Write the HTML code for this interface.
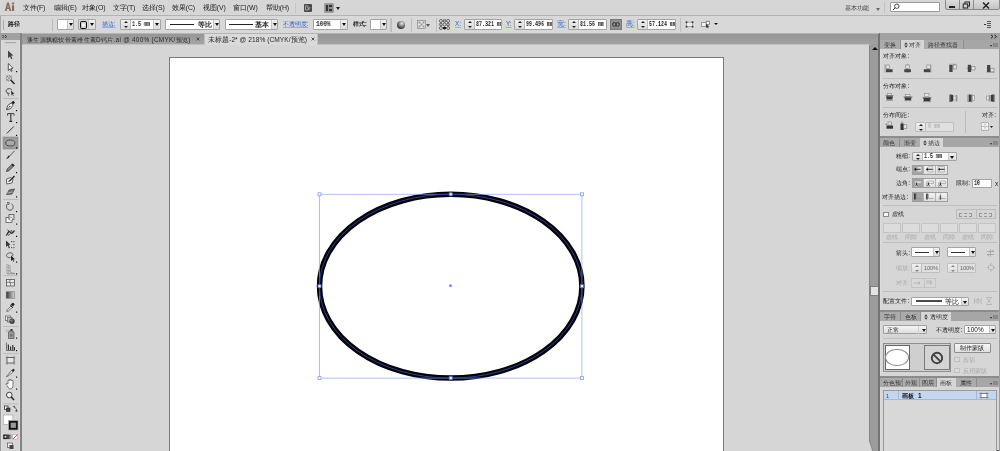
<!DOCTYPE html>
<html><head><meta charset="utf-8">
<style>
*{margin:0;padding:0;box-sizing:border-box}
html,body{width:1000px;height:451px;overflow:hidden;background:#d6d6d6;font-family:"Liberation Sans",sans-serif;color:#222;position:relative}
.a{position:absolute}
.t{position:absolute;font-size:6.4px;line-height:10px;white-space:nowrap;color:#2a2a2a;letter-spacing:-0.1px;will-change:transform}
.pn .t{font-weight:500;color:#262626;letter-spacing:0.12px}
.pn .t.lg{font-weight:normal;color:#aaa}
.m{top:3px;color:#222;font-size:6.9px}
.tri{position:absolute;width:0;height:0;border-left:2px solid transparent;border-right:2px solid transparent;border-top:3px solid #222}
.box,.sp{position:absolute;top:19px;height:11px;border:1px solid #a4a4a4;background:#e2e2e2;border-radius:1px;overflow:hidden}
.wf{position:absolute;left:0;top:0;height:9px;background:#fff}
.dd{position:absolute;top:0;height:9px;background:linear-gradient(#f2f2f2,#dcdcdc);border-left:1px solid #c4c4c4}
.dd:after{content:"";position:absolute;left:50%;top:3px;margin-left:-2px;border-left:2px solid transparent;border-right:2px solid transparent;border-top:3px solid #111}
.ar{position:absolute;left:0;top:0;width:10px;height:9px;background:linear-gradient(#f0f0f0,#dadada);border-right:1px solid #bcbcbc}
.ar:before{content:"";position:absolute;left:3px;top:1px;border-left:2px solid transparent;border-right:2px solid transparent;border-bottom:2.5px solid #222}
.ar:after{content:"";position:absolute;left:3px;top:5.5px;border-left:2px solid transparent;border-right:2px solid transparent;border-top:2.5px solid #222}
.tx{position:absolute;top:0;will-change:transform;font:bold 6.4px/9px "Liberation Mono",monospace;color:#1a1a1a;white-space:nowrap;transform:scaleX(0.78);transform-origin:0 0}
.blu{color:#2f62d0;font-weight:500;text-decoration:underline;text-decoration-color:#8fb0ea}
.tab{position:absolute;height:9px;font-size:6.3px;font-weight:500;will-change:transform;line-height:9px;text-align:center;color:#333;background:#ababab;border-right:1px solid #8f8f8f;white-space:nowrap;overflow:hidden}
.tab.act{background:#d6d6d6;color:#333;border-right:none}
.pm{position:absolute;left:990px;width:7px;height:5px}
.pm:before{content:"";position:absolute;left:0;top:1.5px;border-left:1.5px solid transparent;border-right:1.5px solid transparent;border-top:2px solid #333}
.pm:after{content:"";position:absolute;left:3px;top:-0.5px;width:4.5px;height:4.5px;background:#8a8a8a}
.bg3{position:absolute;left:911.7px;width:36.3px;height:10px;border:1px solid #9e9e9e;background:#e4e4e4;display:flex}
.bg3 i{flex:1;border-right:1px solid #b4b4b4;background:linear-gradient(#f2f2f2,#dedede)}
.bg3 i:last-child{border-right:none}
.bg3 i.s{background:#a4a4a4}
.dash{position:absolute;top:223.3px;width:17.5px;height:9.3px;border:1px solid #c4c4c4;background:#dcdcdc}
.lg{color:#b0b0b0}
.sp.dis{background:#e0e0e0;border-color:#c0c0c0}
.ar.lt:before,.ar.lt:after{border-top-color:#888;border-bottom-color:#888}
.ud{display:inline-block;width:4px;height:6px;margin-right:1px;vertical-align:-0.5px;background:linear-gradient(#555,#555) 1.5px 2.5px/1px 1px no-repeat;position:relative}
.ud:before{content:"";position:absolute;left:0;top:0;border-left:2px solid transparent;border-right:2px solid transparent;border-bottom:2.5px solid #555}
.ud:after{content:"";position:absolute;left:0;top:3.5px;border-left:2px solid transparent;border-right:2px solid transparent;border-top:2.5px solid #555}
</style></head><body>
<!-- menu bar -->
<div class="a" style="left:0;top:0;width:1000px;height:15px;background:#d6d6d6"></div>
<div class="a" style="left:0;top:15px;width:1000px;height:1px;background:#b3b3b3"></div><div class="a" style="left:0;top:16px;width:1000px;height:1px;background:#e0e0e0"></div>
<div class="a" style="left:0;top:16px;width:1000px;height:17px;background:#d8d8d8"></div>
<div class="a" style="left:22px;top:33px;width:857px;height:11px;background:linear-gradient(#939393,#a2a2a2)"></div>
<div class="a" style="left:0;top:33px;width:20px;height:7px;background:#a0a0a0"></div>
<div class="a" style="left:0;top:40px;width:1px;height:411px;background:#9a9a9a"></div><div class="a" style="left:1px;top:40px;width:1px;height:411px;background:#dcdcdc"></div>
<div class="a" style="left:2px;top:40px;width:17px;height:411px;background:#d6d6d6"></div><div class="a" style="left:19px;top:40px;width:1px;height:411px;background:#dcdcdc"></div>
<div class="a" style="left:20px;top:33px;width:2px;height:418px;background:#838383"></div>
<div class="a" style="left:169px;top:57px;width:555px;height:400px;background:#fff;border:1px solid #7a7a7a;border-bottom:none"></div>
<div class="a" style="left:869px;top:44px;width:1px;height:407px;background:#858585"></div><div class="a" style="left:870px;top:44px;width:8px;height:407px;background:#9c9c9c"></div>
<div class="a" style="left:878px;top:33px;width:2px;height:418px;background:#737373"></div><div class="a" style="left:880px;top:33px;width:1px;height:418px;background:#dcdcdc"></div>
<div class="a" style="left:881px;top:33px;width:119px;height:418px;background:#d6d6d6"></div>
<!-- MENU -->
<svg class="a" style="left:0;top:0" width="20" height="15" viewBox="0 0 20 15"><path d="M4.8 11 L7.1 2.5 L8.9 2.5 L11.2 11 L9.4 11 L8.95 9.1 L7.05 9.1 L6.6 11 Z M7.45 7.5 L8.55 7.5 L8 4.9 Z" fill="#8a6d58" fill-rule="evenodd"/><rect x="11.9" y="5.2" width="2.2" height="5.8" fill="#8a6d58"/><rect x="11.9" y="2.5" width="2.2" height="1.9" fill="#8a6d58"/></svg>
<div class="t m" style="left:23px">文件(F)</div>
<div class="t m" style="left:53.5px">编辑(E)</div>
<div class="t m" style="left:82px">对象(O)</div>
<div class="t m" style="left:112.5px">文字(T)</div>
<div class="t m" style="left:142px">选择(S)</div>
<div class="t m" style="left:172px">效果(C)</div>
<div class="t m" style="left:202.5px">视图(V)</div>
<div class="t m" style="left:232.5px">窗口(W)</div>
<div class="t m" style="left:265.5px">帮助(H)</div>
<div class="a" style="left:295px;top:3px;width:1px;height:10px;background:#c4c4c4"></div>
<div class="a" style="left:304px;top:4px;width:8px;height:8px;background:#4a4a4a;border-radius:1px"></div>
<svg class="a" style="left:304px;top:4px" width="8" height="8" viewBox="0 0 8 8"><path d="M1.6 1.8h1.8c1.2 0 1.2 1.8 0 1.9 1.4 0 1.4 2.3 0 2.3H1.6z" fill="none" stroke="#bbb" stroke-width="0.8"/><path d="M5 3.5v2.6M5 4.2c0.4-0.6 0.9-0.7 1.4-0.6" stroke="#bbb" stroke-width="0.8" fill="none"/></svg>
<div class="a" style="left:324px;top:3px;width:10px;height:10px;background:#8f8f8f;border:1px solid #a0a0a0;border-radius:1px"></div>
<div class="a" style="left:325.8px;top:4.8px;width:2.5px;height:6.5px;background:#333"></div>
<div class="a" style="left:329px;top:5px;width:3px;height:2px;background:#333"></div>
<div class="a" style="left:329px;top:9px;width:3px;height:2px;background:#333"></div>
<div class="tri" style="left:335.5px;top:7px"></div>
<div class="t" style="left:844.5px;top:2.5px;color:#3a3a3a;font-weight:500">基本功能</div>
<div class="tri" style="left:876px;top:7.5px;border-top-color:#666"></div>
<div class="a" style="left:884px;top:2px;width:1px;height:11px;background:#c2c2c2"></div>
<div class="a" style="left:890px;top:2px;width:50px;height:10px;background:#fff;border:1px solid #9a9a9a;border-radius:1px"></div>
<svg class="a" style="left:892px;top:3px" width="8" height="8" viewBox="0 0 8 8"><circle cx="4.8" cy="3.2" r="2.2" fill="none" stroke="#333" stroke-width="0.9"/><path d="M3.2 4.8 L1 7" stroke="#333" stroke-width="1"/></svg>
<div class="a" style="left:945px;top:-1px;width:55px;height:11px;background:linear-gradient(#dcdcdc,#c4c4c4);border:1px solid #8a8a8a;border-radius:0 0 2px 2px"></div>
<div class="a" style="left:959px;top:0;width:1px;height:10px;background:#8a8a8a"></div>
<div class="a" style="left:973px;top:0;width:1px;height:10px;background:#8a8a8a"></div>
<div class="a" style="left:949px;top:6px;width:6px;height:2px;background:#222"></div>
<svg class="a" style="left:962px;top:1px" width="9" height="8" viewBox="0 0 9 8"><rect x="3" y="1" width="4.5" height="4" fill="none" stroke="#222" stroke-width="1"/><rect x="1.2" y="3" width="4.5" height="4" fill="#d0d0d0" stroke="#222" stroke-width="1"/></svg>
<svg class="a" style="left:982px;top:1.5px" width="8" height="7" viewBox="0 0 8 7"><path d="M1 0.5 L7 6.5 M7 0.5 L1 6.5" stroke="#222" stroke-width="1.4"/></svg>
<!-- CONTROL BAR -->
<div class="a" style="left:3px;top:20px;width:1px;height:10px;background:#a8a8a8"></div>
<div class="t" style="left:7.5px;top:19px;font-weight:600;color:#222">路径</div><div class="a" style="left:0;top:16px;width:1px;height:17px;background:#a8a8a8"></div>
<div class="a" style="left:52px;top:19px;width:1px;height:12px;background:#bdbdbd"></div>
<div class="box" style="left:57px;width:17px"><div class="wf" style="width:9px"></div><div class="dd" style="left:9px;width:7px"></div></div>
<div class="box" style="left:78px;width:18px;background:#d8d8d8"><div class="a" style="left:0.8px;top:1.4px;width:7.6px;height:7.3px;border:1.85px solid #0a0a0a;border-radius:1.5px;background:radial-gradient(#fff 15%,#b0b0b0 90%)"></div><div class="dd" style="left:9px;width:7px"></div></div>
<div class="t blu" style="left:102px;top:19px">描边:</div>
<div class="sp" style="left:120px;width:41px"><div class="ar"></div><div class="wf" style="left:10px;width:23px"></div><div class="tx" style="left:11px">1.5 mm</div><div class="dd" style="left:32px;width:7px"></div></div>
<div class="box" style="left:165px;width:55px"><div class="wf" style="width:47px"></div><div class="a" style="left:3.5px;top:4px;width:24.5px;height:1px;background:#222"></div><div class="t" style="left:31.5px;top:-0.5px;font-size:6.6px;line-height:10px;color:#222;font-weight:600">等比</div><div class="dd" style="left:47px;width:6px"></div></div>
<div class="box" style="left:225px;width:53px"><div class="wf" style="width:45px"></div><div class="a" style="left:3px;top:4px;width:23.5px;height:1px;background:#222"></div><div class="t" style="left:29px;top:-0.5px;font-size:6.6px;line-height:10px;color:#222;font-weight:600">基本</div><div class="dd" style="left:45px;width:6px"></div></div>
<div class="t blu" style="left:283px;top:19px">不透明度:</div>
<div class="box" style="left:313px;width:35px"><div class="wf" style="width:27px"></div><div class="tx" style="left:1.5px;transform:scaleX(0.95)">100%</div><div class="dd" style="left:26px;width:7px"></div></div>
<div class="t" style="left:352.5px;top:19px;font-weight:600;color:#2a2a2a">样式:</div>
<div class="box" style="left:370px;width:17px"><div class="wf" style="width:10px"></div><div class="dd" style="left:9px;width:6px"></div></div>
<div class="a" style="left:390.5px;top:18px;width:1px;height:14px;background:#bdbdbd"></div>
<div class="a" style="left:397px;top:20.5px;width:8px;height:8px;border-radius:50%;background:radial-gradient(circle at 60% 30%,#eee 0,#999 30%,#444 65%,#111 100%)"></div><div class="a" style="left:390px;top:18px;width:1px;height:14px;background:#c2c2c2"></div>
<div class="a" style="left:410.5px;top:18px;width:1px;height:14px;background:#bdbdbd"></div>
<svg class="a" style="left:416.5px;top:20px" width="9" height="9" viewBox="0 0 9 9"><rect x="0.5" y="0.5" width="8" height="8" fill="#e6e6e6" stroke="#888" stroke-width="0.7"/><g fill="#999"><rect x="1.5" y="1.5" width="2" height="2"/><rect x="5.5" y="1.5" width="2" height="2"/><rect x="3.5" y="3.5" width="2" height="2"/><rect x="1.5" y="5.5" width="2" height="2"/><rect x="5.5" y="5.5" width="2" height="2"/></g></svg>
<div class="tri" style="left:426px;top:24px;border-top-color:#555"></div>
<div class="a" style="left:436px;top:18px;width:1px;height:14px;background:#bdbdbd"></div>
<svg class="a" style="left:439px;top:18.5px" width="11" height="11" viewBox="0 0 11 11"><g fill="#e0e0e0" stroke="#444" stroke-width="0.75"><circle cx="1.9" cy="1.9" r="1.45"/><circle cx="5.5" cy="1.9" r="1.45"/><circle cx="9.1" cy="1.9" r="1.45"/><circle cx="1.9" cy="5.5" r="1.45"/><circle cx="5.5" cy="5.5" r="1.45"/><circle cx="9.1" cy="5.5" r="1.45"/><circle cx="1.9" cy="9.1" r="1.45"/><circle cx="9.1" cy="9.1" r="1.45"/></g><path d="M1.9 3.4V7.6M9.1 3.4V7.6M3.4 1.9H7.6M3.4 9.1H7.6" stroke="#555" stroke-width="0.6"/><ellipse cx="5.5" cy="9.1" rx="1.7" ry="1.3" fill="#111"/></svg>
<div class="t blu" style="left:455px;top:19px">X:</div>
<div class="sp" style="left:463.5px;width:38px"><div class="ar"></div><div class="wf" style="left:10px;width:27px"></div><div class="tx" style="left:11px">87.321 mm</div></div>
<div class="t blu" style="left:505.5px;top:19px">Y:</div>
<div class="sp" style="left:514px;width:38.5px"><div class="ar"></div><div class="wf" style="left:10px;width:27.5px"></div><div class="tx" style="left:11px">99.496 mm</div></div>
<div class="t blu" style="left:556.5px;top:19px;font-size:7px">宽:</div>
<div class="sp" style="left:568px;width:39px"><div class="ar"></div><div class="wf" style="left:10px;width:28px"></div><div class="tx" style="left:11px">81.56 mm</div></div>
<div class="a" style="left:610px;top:19px;width:12px;height:11px;background:#8f8f8f;border:1px solid #7a7a7a"></div>
<svg class="a" style="left:612px;top:21px" width="8" height="7" viewBox="0 0 8 7"><rect x="0.6" y="1.6" width="3.6" height="3.6" rx="1.8" fill="none" stroke="#333" stroke-width="1"/><rect x="3.8" y="1.6" width="3.6" height="3.6" rx="1.8" fill="none" stroke="#333" stroke-width="1"/></svg>
<div class="t blu" style="left:625.5px;top:19px;font-size:7px">高:</div>
<div class="sp" style="left:637px;width:38.5px"><div class="ar"></div><div class="wf" style="left:10px;width:27.5px"></div><div class="tx" style="left:11px">57.124 mm</div></div>
<div class="a" style="left:679.5px;top:18px;width:1px;height:14px;background:#bdbdbd"></div>
<svg class="a" style="left:684px;top:19px" width="11" height="10" viewBox="684 19 11 10"><rect x="686.5" y="22.2" width="6" height="4.4" fill="#eee" stroke="#888" stroke-width="0.6"/><g fill="#333"><rect x="685.7" y="21.4" width="1.7" height="1.7"/><rect x="691.7" y="21.4" width="1.7" height="1.7"/><rect x="685.7" y="25.8" width="1.7" height="1.7"/><rect x="691.7" y="25.8" width="1.7" height="1.7"/></g></svg>
<svg class="a" style="left:700px;top:19px" width="12" height="10" viewBox="700 19 12 10"><rect x="701.6" y="22.6" width="4.6" height="4" fill="#f0f0f0" stroke="#8a8a8a" stroke-width="0.8"/><rect x="706.2" y="21.2" width="3.4" height="3.3" fill="#f4f4f4" stroke="#666" stroke-width="0.7"/><path d="M706 24 L706 28 L707.1 27 L707.9 28.4 L708.6 28 L707.9 26.7 L709.3 26.6 Z" fill="#333"/></svg>
<div class="tri" style="left:713.5px;top:23.3px;border-top-color:#111;border-left-width:2px;border-right-width:2px;border-top-width:2.8px"></div>
<div class="a" style="left:984px;top:24px;width:2px;height:1px;background:#333"></div>
<div class="a" style="left:987px;top:21px;width:4px;height:7px;background:repeating-linear-gradient(#555 0 1px,transparent 1px 2px)"></div>
<!-- TOOLBAR -->
<svg class="a" style="left:0;top:33px" width="22" height="418" viewBox="0 33 22 418">
<g fill="#555">
<path d="M2.5 35L4 36.5 2.5 38M5 35L6.5 36.5 5 38" fill="none" stroke="#333" stroke-width="0.9"/>
</g>
<rect x="5" y="42" width="11" height="1.2" fill="#a8a8a8"/>
<!-- select -->
<path d="M8 50.5 L8 58.2 L9.9 56.4 L11.2 59.2 L12.4 58.6 L11.1 55.8 L13.4 55.6 Z" fill="#444"/>
<!-- direct select -->
<path d="M8.3 63.5 L8.3 70.5 L10 68.9 L11.2 71.4 L12.1 70.9 L11 68.4 L13 68.2 Z" fill="#fafafa" stroke="#333" stroke-width="0.8"/>
<rect x="16" y="71" width="1.2" height="1.2" fill="#111"/>
<!-- magic wand -->
<g stroke="#555" stroke-width="0.9" fill="none"><circle cx="9" cy="78.3" r="2.6" stroke-dasharray="1.2 0.8"/><path d="M6 75.3l6 6M12 75.3l-6 6" stroke-width="0.5"/><path d="M10.8 80 L14.5 84" stroke="#222" stroke-width="1.4"/></g>
<!-- lasso -->
<path d="M11.8 89.8 C10.5 88 6.8 88.3 6.2 90.6 C5.8 92.3 7.5 93.6 9.5 93.4" fill="none" stroke="#444" stroke-width="1"/>
<path d="M8.3 93 C7.8 94 8.3 95 9 96.2" fill="none" stroke="#555" stroke-width="0.9"/>
<path d="M11 90 L11 95.5 L12.2 94.4 L13.1 96.2 L13.9 95.8 L13 94 L14.6 93.9 Z" fill="#333" stroke="#eee" stroke-width="0.3"/>
<rect x="3" y="98" width="15" height="1" fill="#bcbcbc"/>
<!-- pen -->
<path d="M6.5 109.8 L7.6 105.6 L11.2 103 L13.1 104.9 L10.6 108.6 Z" fill="#f2f2f2" stroke="#333" stroke-width="0.8"/>
<path d="M6.8 109.5 L9.6 106.6" stroke="#444" stroke-width="0.6"/><circle cx="9.8" cy="106.4" r="0.6" fill="#333"/>
<path d="M11.3 102.6 L13.2 100.8 L15 102.6 L13.2 104.5 Z" fill="#222"/>
<rect x="16" y="110" width="1.2" height="1.2" fill="#111"/>
<!-- type -->
<path d="M7.6 115.6 V113.6 H14 V115.6" fill="none" stroke="#333" stroke-width="0.9"/>
<path d="M10.8 113.6 V121.4 M9.3 121.4 H12.3" fill="none" stroke="#333" stroke-width="1.1"/>
<rect x="16" y="122" width="1.2" height="1.2" fill="#111"/>
<!-- line -->
<path d="M6.8 133.5 L13.8 126.5" stroke="#333" stroke-width="1"/>
<rect x="16" y="134.8" width="1.2" height="1.2" fill="#111"/>
<!-- ellipse selected -->
<rect x="3" y="137" width="15" height="12" fill="#9c9c9c" stroke="#8a8a8a" stroke-width="0.6"/>
<ellipse cx="10.3" cy="143" rx="4.6" ry="3" fill="#a8a8a8" stroke="#3a3a3a" stroke-width="0.8"/>
<rect x="16" y="147.2" width="1.3" height="1.3" fill="#111"/>
<!-- brush -->
<path d="M9 156.5 L14.5 151" stroke="#444" stroke-width="0.9"/>
<path d="M6 159 C7.5 158.8 9 158 9.8 156.3 L8.8 155.5 C7.5 156.5 7.4 158 6 159Z" fill="#222"/>
<!-- pencil -->
<path d="M6.5 171.5 L7.3 169 L12.5 163.8 L14.2 165.5 L9 170.7 Z" fill="#888" stroke="#333" stroke-width="0.8"/>
<path d="M12 164.3 L13.7 166" stroke="#222" stroke-width="1.6"/>
<rect x="16" y="172" width="1.2" height="1.2" fill="#111"/>
<!-- blob brush -->
<path d="M6.5 179 L11 177.5 L13 179.5 L12 183 L6.8 184 Z" fill="#f4f4f4" stroke="#444" stroke-width="0.8"/>
<path d="M8.5 181.5 C10 181 11 180 11.5 179.2 L14.5 176" stroke="#222" stroke-width="1.3" fill="none"/>
<!-- eraser -->
<path d="M6.5 194.5 L9.2 190 L14.5 189 L12 194 Z" fill="#777" stroke="#444" stroke-width="0.8"/>
<path d="M7 193 L12.8 192" stroke="#ccc" stroke-width="0.6"/>
<rect x="16" y="196.3" width="1.2" height="1.2" fill="#111"/>
<rect x="3" y="199" width="15" height="1" fill="#bcbcbc"/>
<!-- rotate -->
<path d="M8 203.5 C5.5 204.8 5.8 210 10 210.2 C13.5 210.3 14.2 205.5 11.5 203.8" fill="none" stroke="#555" stroke-width="1"/>
<path d="M7 202.5 L9.3 202.8 L8.5 205" fill="none" stroke="#555" stroke-width="0.9"/>
<rect x="16" y="211" width="1.2" height="1.2" fill="#111"/>
<!-- scale -->
<rect x="6" y="217.5" width="6" height="5" fill="#f4f4f4" stroke="#555" stroke-width="0.8"/>
<rect x="9" y="214.5" width="5" height="5" fill="#ddd" stroke="#555" stroke-width="0.8"/>
<circle cx="11" cy="219" r="1.5" fill="#fff" stroke="#666" stroke-width="0.5"/>
<rect x="16" y="223.5" width="1.2" height="1.2" fill="#111"/>
<!-- warp -->
<path d="M6.3 235.5 C7.5 234 8 232 9 231.5 C10 231 10.2 233 11.3 233.2 C12.6 233.4 13.5 231.5 14.5 230.5" fill="none" stroke="#333" stroke-width="1.4"/>
<path d="M7.5 229.5 L9.3 231.6 M11 230 C11.8 230.8 12 231.5 12 232.3 M8 235.5 L10 234" stroke="#444" stroke-width="0.9" fill="none"/>
<rect x="16" y="235.8" width="1.2" height="1.2" fill="#111"/>
<!-- free transform -->
<path d="M6 240.5 L6 247 L7.7 245.4 L9 248 L9.8 247.6 L8.7 245 L10.5 244.8 Z" fill="#333"/>
<g fill="#555"><rect x="11" y="241" width="1.2" height="1.2"/><rect x="13.3" y="241" width="1.2" height="1.2"/><rect x="13.3" y="244" width="1.2" height="1.2"/><rect x="13.3" y="247" width="1.2" height="1.2"/><rect x="11" y="247" width="1.2" height="1.2"/><rect x="8.5" y="247" width="1.2" height="1.2"/></g>
<!-- shape builder -->
<path d="M12.5 256 C14.5 253 10 252 7.5 253.5 C5.5 255 6.5 258.5 10.5 257.5" fill="none" stroke="#555" stroke-width="0.9"/>
<path d="M11 255.5 L11 261 L12.4 259.8 L13.4 261.8 L14.2 261.4 L13.2 259.5 L15 259.3 Z" fill="#222"/>
<rect x="16" y="261.5" width="1.2" height="1.2" fill="#111"/>
<!-- perspective grid -->
<defs><linearGradient id="pg" x1="0" x2="1" y1="0" y2="1"><stop offset="0" stop-color="#f4f4f4"/><stop offset="1" stop-color="#bdbdbd"/></linearGradient></defs>
<path d="M7 264.5 L10 265.8 V272 L15 273.8 H7 Z" fill="url(#pg)" stroke="#777" stroke-width="0.6"/>
<path d="M8.5 265 V273.8 M7 267.5 H10 M7 270.5 H10.5" stroke="#888" stroke-width="0.5"/>
<rect x="16" y="273.3" width="1.2" height="1.2" fill="#111"/>
<rect x="3" y="275" width="15" height="1" fill="#bcbcbc"/>
<!-- mesh -->
<rect x="6.5" y="279.5" width="8" height="6.5" fill="#e8e8e8" stroke="#555" stroke-width="0.8"/>
<path d="M6.5 282.5 C9 281.5 11 283.5 14.5 282.5 M10 279.5 C9 282 11.5 284 10.5 286" fill="none" stroke="#555" stroke-width="0.7"/>
<!-- gradient -->
<defs><linearGradient id="gr" x1="0" x2="1"><stop offset="0" stop-color="#333"/><stop offset="1" stop-color="#ddd"/></linearGradient>
<radialGradient id="bl" cx="0.4" cy="0.4"><stop offset="0" stop-color="#888"/><stop offset="1" stop-color="#333"/></radialGradient></defs>
<rect x="6.2" y="291.8" width="8.6" height="6.4" fill="url(#gr)" stroke="#666" stroke-width="0.5"/>
<!-- eyedropper -->
<path d="M6.8 311.5 L7.2 310 L11 306 L12.3 307.3 L8.3 311.1 Z" fill="#f0f0f0" stroke="#444" stroke-width="0.7"/>
<path d="M11 304.5 L13 303 L14.2 304.2 L12.7 306.2 Z M10.3 305.3 L13 308" fill="#222" stroke="#222" stroke-width="0.9"/>
<rect x="16" y="311.5" width="1.2" height="1.2" fill="#111"/>
<!-- blend -->
<rect x="5.5" y="316" width="5" height="4.5" fill="#eee" stroke="#555" stroke-width="0.7"/>
<rect x="7.5" y="317.5" width="4.5" height="4.5" fill="#bbb" stroke="#555" stroke-width="0.6"/>
<circle cx="12" cy="321.2" r="2.6" fill="url(#bl)"/>
<rect x="3" y="326" width="15" height="1" fill="#bcbcbc"/>
<!-- symbol sprayer -->
<path d="M9 331 h4 v1 h1 v6.5 h-5.5 v-6.5 h0.5z" fill="#9a9a9a" stroke="#555" stroke-width="0.7"/>
<rect x="10.5" y="329" width="2" height="2" fill="#333"/>
<path d="M5.5 330 h3.5 M6 331.5 h2.5" stroke="#aaa" stroke-width="0.6"/>
<rect x="10" y="334" width="2.5" height="2.5" fill="#777"/>
<rect x="16" y="337.5" width="1.2" height="1.2" fill="#111"/>
<!-- column graph -->
<path d="M6.5 342.5 V350.5 H15" fill="none" stroke="#444" stroke-width="0.7"/>
<rect x="7.8" y="344.5" width="1.2" height="5.5" fill="#333"/><rect x="10" y="346.5" width="1.2" height="3.5" fill="#333"/><rect x="12.2" y="345" width="1.2" height="5" fill="#333"/><rect x="14" y="347" width="1" height="3" fill="#333"/>
<rect x="16" y="350" width="1.2" height="1.2" fill="#111"/>
<rect x="3" y="353" width="15" height="1" fill="#bcbcbc"/>
<!-- artboard -->
<rect x="7" y="357.5" width="7" height="5.5" fill="#e6e6e6" stroke="#555" stroke-width="0.9"/>
<path d="M5.5 357.5h1.5M14 357.5h1.5M5.5 363h1.5M14 363h1.5M7 355.5v2M14 355.5v2M7 363v2M14 363v2" stroke="#777" stroke-width="0.6"/>
<!-- slice -->
<path d="M6.5 376.5 L11.5 370.5 L13.5 369 L14.5 370 L13 372 L7.5 376.5 Z" fill="#eee" stroke="#444" stroke-width="0.7"/>
<path d="M11.5 370.5 L13.5 369 L14.5 370 L13 372 Z" fill="#222"/>
<rect x="16" y="376.5" width="1.2" height="1.2" fill="#111"/>
<!-- hand -->
<path d="M7.5 386 C6.5 385 5.5 384.2 6.2 383.5 C6.8 383 7.6 383.8 8 384.2 V380.8 C8 380 9.2 380 9.2 380.8 V379.8 C9.2 379 10.5 379 10.5 379.8 V380.2 C10.5 379.5 11.8 379.5 11.8 380.4 V381 C11.8 380.3 13 380.3 13 381 V385 C13 387.5 12 389 10 389 C8.8 389 8.2 387.5 7.5 386Z" fill="#fafafa" stroke="#444" stroke-width="0.7"/>
<rect x="16" y="388.5" width="1.2" height="1.2" fill="#111"/>
<!-- zoom -->
<circle cx="9.3" cy="395" r="2.8" fill="#f2f2f2" stroke="#333" stroke-width="0.9"/>
<path d="M11.3 397 L14 400" stroke="#222" stroke-width="1.5"/>
<rect x="3" y="403.3" width="15" height="1" fill="#bcbcbc"/>
<!-- small default/swap -->
<rect x="4.5" y="406" width="3.5" height="3.5" fill="#fff" stroke="#333" stroke-width="0.8"/>
<rect x="6.5" y="408" width="3.5" height="3.5" fill="#444" stroke="#222" stroke-width="0.6"/>
<path d="M14 406.5 L15 407.8 L16.5 409 V411" fill="none" stroke="#444" stroke-width="0.8"/>
<path d="M13 407 L14.5 406 L14.6 407.6 M15.5 410.5 L16.5 412 L17.5 410.5" fill="none" stroke="#444" stroke-width="0.8"/>
<!-- fill/stroke swatches -->
<rect x="3.3" y="415" width="9.5" height="9.5" fill="#fff" stroke="#a8a8a8" stroke-width="0.7"/>
<rect x="8.5" y="420.5" width="9.5" height="9.5" fill="#c8c8c8" stroke="#999" stroke-width="0.6"/>
<rect x="9.8" y="421.8" width="7" height="7" fill="#999" stroke="#111" stroke-width="1.8"/>
<!-- color mode -->
<rect x="3.2" y="434.5" width="4.6" height="4.6" fill="#222"/>
<circle cx="5.5" cy="436.8" r="1" fill="#eee"/>
<rect x="8" y="434.5" width="4.6" height="4.6" fill="url(#gr)"/>
<rect x="12.8" y="434.5" width="4.8" height="4.6" fill="#fff" stroke="#888" stroke-width="0.4"/>
<path d="M13 439 L17.5 434.6" stroke="#e22" stroke-width="0.9"/>
<!-- screen mode -->
<rect x="7.5" y="443" width="5" height="4.5" fill="#eee" stroke="#555" stroke-width="0.7"/>
<rect x="9.5" y="445" width="4" height="4" fill="#444"/>
</svg>
<!-- TABS -->
<div class="a" style="left:22px;top:33px;width:182px;height:11px;background:linear-gradient(#959595,#a4a4a4)"></div>
<div class="t" style="left:27px;top:34.8px;font-size:6.4px;color:#2a2a2a;font-weight:500;letter-spacing:0.28px">蓬生源飘糖软骨素维生素D钙片.ai @ 400% (CMYK/预览)</div>
<svg class="a" style="left:196px;top:37px" width="4" height="4"><path d="M0.6 0.6L3.4 3.4M3.4 0.6L0.6 3.4" stroke="#444" stroke-width="0.9"/></svg>
<div class="a" style="left:204px;top:33.5px;width:114px;height:11px;background:#dadada;border-left:1px solid #c0c0c0;border-right:1px solid #c0c0c0"></div><div class="a" style="left:22px;top:32.5px;width:857px;height:1px;background:#b4b4b4"></div><div class="a" style="left:22px;top:43.5px;width:182px;height:1px;background:#c2c2c2"></div><div class="a" style="left:318px;top:43.5px;width:552px;height:1px;background:#c2c2c2"></div>
<div class="t" style="left:208px;top:34.8px;font-size:6.6px;color:#2a2a2a;font-weight:500;letter-spacing:0.05px">未标题-2* @ 218% (CMYK/预览)</div>
<svg class="a" style="left:311px;top:37px" width="4" height="4"><path d="M0.6 0.6L3.4 3.4M3.4 0.6L0.6 3.4" stroke="#444" stroke-width="0.9"/></svg>
<!-- ellipse -->
<svg class="a" style="left:0;top:0" width="1000" height="451">
<ellipse cx="450.7" cy="286.2" rx="131.2" ry="91.9" fill="none" stroke="#030305" stroke-width="5.5"/>
<rect x="319.5" y="194.3" width="262.4" height="183.8" fill="none" stroke="#8aa4f6" stroke-width="0.9" opacity="0.75"/>
<ellipse cx="450.7" cy="286.2" rx="131.2" ry="91.9" fill="none" stroke="#27409a" stroke-width="1"/>
<g fill="#fff" stroke="#7f9cf5" stroke-width="0.8">
<rect x="318" y="192.8" width="3" height="3"/><rect x="580.4" y="192.8" width="3" height="3"/>
<rect x="318" y="376.6" width="3" height="3"/><rect x="580.4" y="376.6" width="3" height="3"/>
</g>
<g fill="#fff" stroke="#4a6ee8" stroke-width="0.8">
<rect x="449.2" y="192.8" width="3" height="3"/><rect x="449.2" y="376.6" width="3" height="3"/>
<rect x="318" y="284.7" width="3" height="3"/><rect x="580.4" y="284.7" width="3" height="3"/>
</g>
<rect x="449.4" y="284.6" width="2.2" height="2.2" fill="#3f6cf5"/>
</svg>
<div class="a" style="left:872px;top:47px;width:0;height:0;border-left:3px solid transparent;border-right:3px solid transparent;border-bottom:3.5px solid #111"></div>
<div class="a" style="left:870px;top:286px;width:8px;height:10px;background:#808080"></div><div class="a" style="left:870.5px;top:287px;width:7.5px;height:8.3px;background:#e4e4e4"></div>
<svg class="a" style="left:866px;top:438px" width="10" height="13" viewBox="866 438 10 13"><path d="M869 440.5 L872.5 451 L866 451 L866 440.5 Z" fill="#d6d6d6"/><path d="M869.5 440.5 L872.8 451" stroke="#8a8a8a" stroke-width="1" fill="none"/></svg>
<div class="a" style="left:995px;top:449.5px;width:5px;height:1.5px;background:#4f5460"></div>
<div class="pn">
<!-- RIGHT PANEL -->
<div class="a" style="left:880px;top:33px;width:120px;height:7px;background:#a2a2a2"></div>
<svg class="a" style="left:990px;top:34px" width="8" height="5" viewBox="0 0 8 5"><path d="M1 0.8L3 2.5 1 4.2M4.5 0.8L6.5 2.5 4.5 4.2" fill="none" stroke="#222" stroke-width="1"/></svg>

<!-- panel1 tabs -->
<div class="a" style="left:880px;top:40px;width:120px;height:9px;background:#a6a6a6"></div>
<div class="tab" style="left:880px;top:40px;width:20.5px">变换</div>
<div class="tab act" style="left:900.5px;top:40px;width:23.2px"><svg width="4" height="6" viewBox="0 0 4 6" style="vertical-align:-0.5px;margin-right:1.5px"><path d="M0.2 2.4L2 0.3 3.8 2.4zM0.2 3.6L2 5.7 3.8 3.6z" fill="#444"/></svg>对齐</div>
<div class="tab" style="left:923.7px;top:40px;width:39.7px">路径查找器</div>
<div class="pm" style="top:43px"></div>
<div class="a" style="left:999px;top:40px;width:1px;height:411px;background:#9c9c9c"></div>
<div class="t" style="left:883px;top:51px">对齐对象:</div>
<svg class="a" style="left:880px;top:60px" width="120" height="20" viewBox="880 60 120 20">
<g stroke="#8a8a8a" stroke-width="0.7" fill="#e4e4e4">
<path d="M885 64.5V72.5" fill="none"/><rect x="886" y="65" width="3.5" height="3.6"/>
<path d="M907.5 63.8V73" fill="none"/><rect x="905.8" y="65" width="3.5" height="3.6"/>
<path d="M930.8 64.5V72.5" fill="none"/><rect x="926.8" y="65" width="3.5" height="3.6"/>
<path d="M949 64.3H956.5" fill="none"/><rect x="953.3" y="65" width="3.2" height="4"/>
<path d="M966.5 68.3H975.5" fill="none"/><rect x="971.5" y="66.5" width="3.5" height="3.5"/>
<path d="M986.5 72.3H994.5" fill="none"/><rect x="990.5" y="68.3" width="3.5" height="3.5"/>
</g>
<g fill="#444">
<rect x="886" y="69.2" width="6.6" height="3"/><rect x="904.3" y="69.2" width="6.6" height="3"/><rect x="923.8" y="69.2" width="6.6" height="3"/>
<rect x="949.3" y="65" width="3.3" height="7"/><rect x="967.8" y="64.8" width="3.3" height="7.2"/><rect x="987" y="65" width="3.3" height="7"/>
</g>
</svg>
<div class="a" style="left:883px;top:78px;width:114px;height:1px;background:#bfbfbf"></div>
<div class="t" style="left:883px;top:80.5px">分布对象:</div>
<svg class="a" style="left:880px;top:90px" width="120" height="16" viewBox="880 90 120 16">
<g fill="#e6e6e6" stroke="#888" stroke-width="0.6">
<rect x="887.5" y="93.3" width="4" height="2"/><rect x="905.5" y="94.3" width="4.5" height="2.2"/><rect x="924.5" y="93.5" width="4.5" height="3"/>
<rect x="953.5" y="96" width="2.5" height="4"/><rect x="972" y="95.5" width="2.5" height="5"/><rect x="986.5" y="96" width="2.5" height="4"/>
</g>
<g fill="#3a3a3a">
<path d="M886 96.2h7l-0.8 3.3h-5.4z"/><path d="M904.3 97.3h7.4l-0.8 2.8h-5.8z"/><path d="M923.3 98h7.4l-0.5 3h-6.4z"/>
<path d="M950.2 94.3v7.8l2.8-0.8v-6.2z"/><path d="M968.8 94.3v7.8l2.6-0.6v-6.6z"/><path d="M993.8 94.3v7.8l-3-0.8v-6.2z"/>
</g>
<g stroke="#666" stroke-width="0.7" fill="none">
<path d="M885.5 95.5H893.5M886 100.2H893"/><path d="M903.5 96.8H912.5M904.5 100.6H911.5"/><path d="M922.5 97.5H931.5M923 101.6H931"/>
<path d="M949.5 94.5V102M956.8 95V101.5"/><path d="M971.8 94V102.5M968 94.5V102"/><path d="M994.5 94.5V102M989.8 95V101.5"/>
</g>
</svg>
<div class="a" style="left:883px;top:107px;width:114px;height:1px;background:#bfbfbf"></div>
<div class="t" style="left:883px;top:109.5px">分布间距:</div>
<div class="t" style="left:981.5px;top:109.5px">对齐:</div>
<div class="a" style="left:965px;top:111px;width:1px;height:22px;background:#bcbcbc"></div>
<svg class="a" style="left:880px;top:118px" width="120" height="16" viewBox="880 118 120 16">
<rect x="886.5" y="125.5" width="6.5" height="3.2" fill="#333"/><rect x="888" y="122" width="3.5" height="3" fill="#e8e8e8" stroke="#777" stroke-width="0.6"/><path d="M885.5 124.3h1.5" stroke="#555" stroke-width="0.8"/>
<rect x="900.5" y="123.5" width="3.2" height="6.5" fill="#333"/><rect x="903.8" y="124.8" width="3" height="3.5" fill="#e8e8e8" stroke="#777" stroke-width="0.6"/><path d="M902 121.5v1.5" stroke="#555" stroke-width="0.8"/>
<g fill="#f0f0f0" stroke="#555" stroke-width="0.5" stroke-dasharray="0.9 0.6"><rect x="981.5" y="122.5" width="7" height="8"/></g>
<path d="M981.5 126.5h7M985 122.5v8" stroke="#666" stroke-width="0.5" stroke-dasharray="0.9 0.6"/>
<path d="M990 126l1.5 2 1.5-2z" fill="#222"/>
</svg>
<div class="sp dis" style="left:915px;top:122px;width:39px;height:9.5px"><div class="ar"></div><div class="tx" style="left:12px;color:#aaa;font-weight:normal;line-height:8px">0 mm</div></div>
<!-- panel 2: stroke -->
<div class="a" style="left:880px;top:136px;width:119px;height:1.5px;background:#8c8c8c"></div>
<div class="a" style="left:880px;top:137.5px;width:119px;height:9.3px;background:#a6a6a6"></div>
<div class="tab" style="left:880px;top:137.5px;width:19.6px">颜色</div>
<div class="tab" style="left:899.6px;top:137.5px;width:20.8px">渐变</div>
<div class="tab act" style="left:920.4px;top:137.5px;width:22.5px"><svg width="4" height="6" viewBox="0 0 4 6" style="vertical-align:-0.5px;margin-right:1.5px"><path d="M0.2 2.4L2 0.3 3.8 2.4zM0.2 3.6L2 5.7 3.8 3.6z" fill="#444"/></svg>描边</div>
<div class="pm" style="top:141px"></div>
<div class="t" style="left:895.5px;top:151px">粗细:</div>
<div class="sp" style="left:911.7px;top:151.5px;width:45px;height:9.5px"><div class="ar" style="height:7.5px"></div><div class="wf" style="left:10px;width:25px;height:7.5px"></div><div class="tx" style="left:11px;line-height:8px">1.5 mm</div><div class="dd" style="left:35px;width:8px;height:7.5px"></div></div>
<div class="t" style="left:895.5px;top:164px">端点:</div>
<div class="bg3" style="top:164.5px"><i class="s"></i><i></i><i></i></div>
<div class="t" style="left:895.5px;top:178px">边角:</div>
<div class="bg3" style="top:178px"><i class="s"></i><i></i><i></i></div>
<div class="t" style="left:956px;top:178px">限制:</div>
<div class="a" style="left:972.3px;top:178.5px;width:20px;height:9.5px;background:#fff;border:1px solid #a4a4a4"></div>
<div class="tx" style="left:974px;top:178.5px;line-height:9px">10</div>
<div class="t" style="left:995px;top:178.5px;font-size:6.5px">x</div>
<div class="t" style="left:882.3px;top:192px">对齐描边:</div>
<div class="bg3" style="top:192px"><i class="s"></i><i></i><i></i></div>
<svg class="a" style="left:911px;top:164px" width="38" height="38" viewBox="911 164 38 38">
<g fill="#e8e8e8" stroke="#999" stroke-width="0.6">
<rect x="917.5" y="167" width="4" height="4.5" stroke="none" fill="#e0e0e0"/>
<path d="M929.5 166.6 A2.7 2.7 0 0 0 929.5 172 H933 V166.6 Z"/>
<rect x="938" y="166.6" width="6.5" height="5.4"/>
<path d="M914.5 187 V181 H921.5 V183.5 H917 V187 Z" fill="#ddd"/>
<path d="M926.5 187 V183 Q926.5 181 928.5 181 H933.5 V183.5 H929 V187 Z"/>
<path d="M938.5 187 V183 L940.5 181 H945.5 V183.5 H941 V187 Z"/>
</g>
<g stroke="#111" stroke-width="0.9" fill="none">
<path d="M914.5 169.3 H920.5"/><path d="M926.5 169.3 H932.5"/><path d="M938.5 169.3 H944.5"/>
</g>
<g fill="#111">
<path d="M914 169.3 L916 167.9 V170.7 Z"/><path d="M926 169.3 L928 167.9 V170.7 Z"/><path d="M938 169.3 L940 167.9 V170.7 Z"/>
<path d="M915.8 182.5 V186 L914.8 185 H917.8 L916.8 186 V182.5Z"/><path d="M927.8 182.5 V186 L926.8 185 H929.8 L928.8 186 V182.5Z"/><path d="M939.8 182.5 V186 L938.8 185 H941.8 L940.8 186 V182.5Z"/>
<rect x="914.3" y="193.5" width="1.3" height="6"/><rect x="926.3" y="193.5" width="1.3" height="6"/><rect x="939.8" y="195.5" width="1.3" height="4"/>
</g>
<g stroke="#888" stroke-width="0.6" fill="none">
<path d="M916.5 193.5 V198.5 H921.5"/><path d="M928.5 193.5 V198.5 H933.5"/><path d="M938.5 198.5 H945.5 M940.5 193.5 V198.5"/>
</g>
</svg>
<div class="a" style="left:883px;top:204.5px;width:114px;height:1px;background:#bfbfbf"></div>
<div class="a" style="left:883.4px;top:211.5px;width:5.5px;height:5.5px;background:#f4f4f4;border:1px solid #8a8a8a"></div>
<div class="t" style="left:891.5px;top:209px">虚线</div>
<div class="a" style="left:955.6px;top:209.3px;width:40.5px;height:10px;border:1px solid #bcbcbc;background:#d4d4d4"></div>
<div class="a" style="left:975.8px;top:209.3px;width:1px;height:10px;background:#bcbcbc"></div>
<div class="a" style="left:959px;top:212.5px;width:13px;height:4px;border:1px dashed #999"></div>
<div class="a" style="left:979px;top:212.5px;width:13px;height:4px;border:1px dashed #999"></div>
<div class="dash" style="left:883.4px"></div><div class="dash" style="left:902px"></div><div class="dash" style="left:921.2px"></div><div class="dash" style="left:940px"></div><div class="dash" style="left:959px"></div><div class="dash" style="left:978.2px"></div>
<div class="t lg" style="left:886px;top:231.5px">虚线</div><div class="t lg" style="left:905px;top:231.5px">间隙</div><div class="t lg" style="left:924px;top:231.5px">虚线</div><div class="t lg" style="left:943px;top:231.5px">间隙</div><div class="t lg" style="left:962px;top:231.5px">虚线</div><div class="t lg" style="left:981px;top:231.5px">间隙</div>
<div class="a" style="left:883px;top:242px;width:114px;height:1px;background:#bfbfbf"></div>
<div class="t" style="left:895.5px;top:248px">箭头:</div>
<div class="box" style="left:911.4px;top:247.4px;width:28.7px;height:9.7px"><div class="wf" style="width:21px;height:7.7px"></div><div class="a" style="left:3px;top:3.5px;width:14px;height:1px;background:#333"></div><div class="dd" style="left:21px;width:6px;height:7.7px"></div></div>
<div class="box" style="left:947px;top:247.4px;width:28.8px;height:9.7px"><div class="wf" style="width:21px;height:7.7px"></div><div class="a" style="left:3px;top:3.5px;width:14px;height:1px;background:#333"></div><div class="dd" style="left:21px;width:6px;height:7.7px"></div></div>
<svg class="a" style="left:986px;top:248px" width="10" height="10" viewBox="0 0 10 10"><path d="M1 3.5h7M6 2l2 1.5M1 6.5h7M3 8L1 6.5M4.5 1.5v7" stroke="#9a9a9a" stroke-width="0.7" fill="none"/></svg>
<div class="t lg" style="left:895.5px;top:262.5px">缩放:</div>
<div class="sp dis" style="left:911.4px;top:263.4px;width:28.7px;height:9.4px"><div class="ar lt"></div><div class="t" style="left:11.5px;top:-1.5px;color:#6a6a6a;font-weight:normal;font-size:5.8px;letter-spacing:-0.2px">100%</div></div>
<div class="sp dis" style="left:947px;top:263.4px;width:28.8px;height:9.4px"><div class="ar lt"></div><div class="t" style="left:11.5px;top:-1.5px;color:#6a6a6a;font-weight:normal;font-size:5.8px;letter-spacing:-0.2px">100%</div></div>
<svg class="a" style="left:986px;top:262px" width="10" height="11" viewBox="0 0 10 11"><path d="M5 1v2M2.5 4c0-1 5-1 5 0v3c0 1-5 1-5 0z M1 5.5h1.5M7.5 5.5H9M5 8v2" stroke="#aaa" stroke-width="0.7" fill="none"/></svg>
<div class="t lg" style="left:895.5px;top:277.5px">对齐:</div>
<div class="a" style="left:911.4px;top:278.2px;width:24.4px;height:10px;border:1px solid #c4c4c4;background:#d8d8d8"></div>
<div class="a" style="left:923.5px;top:278.2px;width:1px;height:10px;background:#c4c4c4"></div>
<svg class="a" style="left:911px;top:278px" width="25" height="10" viewBox="0 0 25 10"><path d="M3 5h6M7 3.5l2 1.5-2 1.5M15 5h6M19 3.5l2 1.5-2 1.5M15 3h6" stroke="#aaa" stroke-width="0.7" fill="none"/></svg>
<div class="a" style="left:883px;top:291px;width:114px;height:1px;background:#bfbfbf"></div>
<div class="t" style="left:882.7px;top:295.7px">配置文件:</div>
<div class="box" style="left:911.4px;top:296.5px;width:57.4px;height:9.6px"><div class="wf" style="width:48.5px;height:7.6px"></div><div class="a" style="left:3.5px;top:2.8px;width:26px;height:2.2px;background:#4a4a4a"></div><div class="t" style="left:33px;top:-1px;font-size:6.6px;line-height:9px;color:#222">等比</div><div class="dd" style="left:48.5px;width:7px;height:7.6px"></div></div>
<svg class="a" style="left:973px;top:296px" width="24" height="10" viewBox="0 0 24 10"><path d="M1.5 2v6M8 2v6M2.5 5l2.5-2.5v5z M7 5L4.8 3" stroke="#aaa" stroke-width="0.7" fill="none"/><path d="M13 1.5h6M13 8.5h6M14 2.5l2 2.5 2-2.5M14 7.5l2-2.5 2 2.5" stroke="#aaa" stroke-width="0.7" fill="none"/></svg>
<!-- panel 3: transparency -->
<div class="a" style="left:880px;top:310px;width:119px;height:1.5px;background:#8c8c8c"></div>
<div class="a" style="left:880px;top:311.5px;width:119px;height:9.4px;background:#a6a6a6"></div>
<div class="tab" style="left:880px;top:311.5px;width:20.5px">字符</div>
<div class="tab" style="left:900.5px;top:311.5px;width:20.2px">色板</div>
<div class="tab act" style="left:920.7px;top:311.5px;width:29.5px"><svg width="4" height="6" viewBox="0 0 4 6" style="vertical-align:-0.5px;margin-right:1.5px"><path d="M0.2 2.4L2 0.3 3.8 2.4zM0.2 3.6L2 5.7 3.8 3.6z" fill="#444"/></svg>透明度</div>
<div class="pm" style="top:315px"></div>
<div class="a" style="left:883.4px;top:325px;width:44px;height:9.3px;border:1px solid #a0a0a0;background:linear-gradient(#f4f4f4,#dedede);border-radius:1px"></div>
<div class="t" style="left:887px;top:324.5px;color:#222">正常</div>
<div class="a" style="left:918px;top:326px;width:1px;height:7.5px;background:#d0d0d0"></div>
<div class="tri" style="left:921.5px;top:328.5px"></div>
<div class="t" style="left:935.8px;top:324.5px">不透明度:</div>
<div class="box" style="left:964.2px;top:325px;width:32px;height:9.3px"><div class="wf" style="width:24px;height:7.3px"></div><div class="t" style="left:1.5px;top:-1.5px;font-weight:normal;color:#111;font-size:6.4px">100%</div><div class="dd" style="left:24px;width:6px;height:7.3px"></div></div>
<div class="a" style="left:883px;top:338px;width:114px;height:1px;background:#bfbfbf"></div>
<div class="a" style="left:883px;top:343.2px;width:68.3px;height:28.4px;border:1px solid #8e8e8e;background:#cfcfcf"></div>
<div class="a" style="left:884.5px;top:344.5px;width:25px;height:25.8px;background:#fff;border:1px solid #666"></div>
<div class="a" style="left:885.2px;top:348.8px;width:23.6px;height:17.6px;border:0.8px solid #8a8a8a;border-radius:50%"></div>
<div class="a" style="left:924.3px;top:344.5px;width:25.4px;height:25.8px;background:#d4d4d4;border:1px solid #7a7a7a"></div>
<svg class="a" style="left:930px;top:350.6px" width="14" height="14" viewBox="0 0 14 14"><circle cx="7" cy="7" r="5.2" fill="none" stroke="#404040" stroke-width="1.9"/><path d="M3.3 3.3 L10.7 10.7" stroke="#404040" stroke-width="1.9"/></svg>
<div class="a" style="left:954.4px;top:342.5px;width:36.2px;height:10px;border:1px solid #8e8e8e;background:linear-gradient(#f6f6f6,#e0e0e0);border-radius:1px"></div>
<div class="t" style="left:960px;top:342.5px;color:#1a1a1a">制作蒙版</div>
<div class="a" style="left:954.4px;top:356.8px;width:5.5px;height:5.5px;border:1px solid #c0c0c0;background:#dadada"></div>
<div class="t lg" style="left:963px;top:354.5px">剪切</div>
<div class="a" style="left:954.4px;top:367.7px;width:5.5px;height:5.5px;border:1px solid #c0c0c0;background:#dadada"></div>
<div class="t lg" style="left:963px;top:365.5px">反相蒙版</div>
<!-- panel 4: artboards -->
<div class="a" style="left:880px;top:376px;width:119px;height:1.5px;background:#8c8c8c"></div>
<div class="a" style="left:880px;top:377.5px;width:119px;height:9.5px;background:#a6a6a6"></div>
<div class="tab" style="left:880px;top:377.5px;width:22.8px;text-align:left;padding-left:2.5px">分色预览</div>
<div class="tab" style="left:902.8px;top:377.5px;width:17.2px">外观</div>
<div class="tab" style="left:920px;top:377.5px;width:17px">图层</div>
<div class="tab act" style="left:937px;top:377.5px;width:18.6px">画板</div>
<div class="tab" style="left:955.6px;top:377.5px;width:21px">属性</div>
<div class="pm" style="top:381px"></div>
<div class="a" style="left:882.7px;top:390px;width:114.1px;height:70px;border:1px solid #9a9a9a;background:#d8d8d8"></div>
<div class="a" style="left:883.7px;top:391px;width:112px;height:8.8px;background:#c2d6f0;border-bottom:1px solid #a8b8cc"></div>
<div class="a" style="left:898.2px;top:391px;width:1px;height:8.8px;background:#a8b8cc"></div>
<div class="a" style="left:975.5px;top:391px;width:1px;height:8.8px;background:#a8b8cc"></div>
<div class="t" style="left:886px;top:391px;font-size:5.5px;color:#444">1</div>
<div class="t" style="left:901.5px;top:390.5px;color:#1a1a1a;font-weight:600">画板 &nbsp;1</div>
<svg class="a" style="left:978px;top:391px" width="12" height="9" viewBox="0 0 12 9"><rect x="3" y="2.5" width="6" height="4" fill="#fff" stroke="#555" stroke-width="0.7"/><path d="M1 2.5h2M9 2.5h2M1 6.5h2M9 6.5h2M3 1v1.5M9 1v1.5M3 6.5V8M9 6.5V8" stroke="#777" stroke-width="0.5"/></svg>

</div>
</body></html>
